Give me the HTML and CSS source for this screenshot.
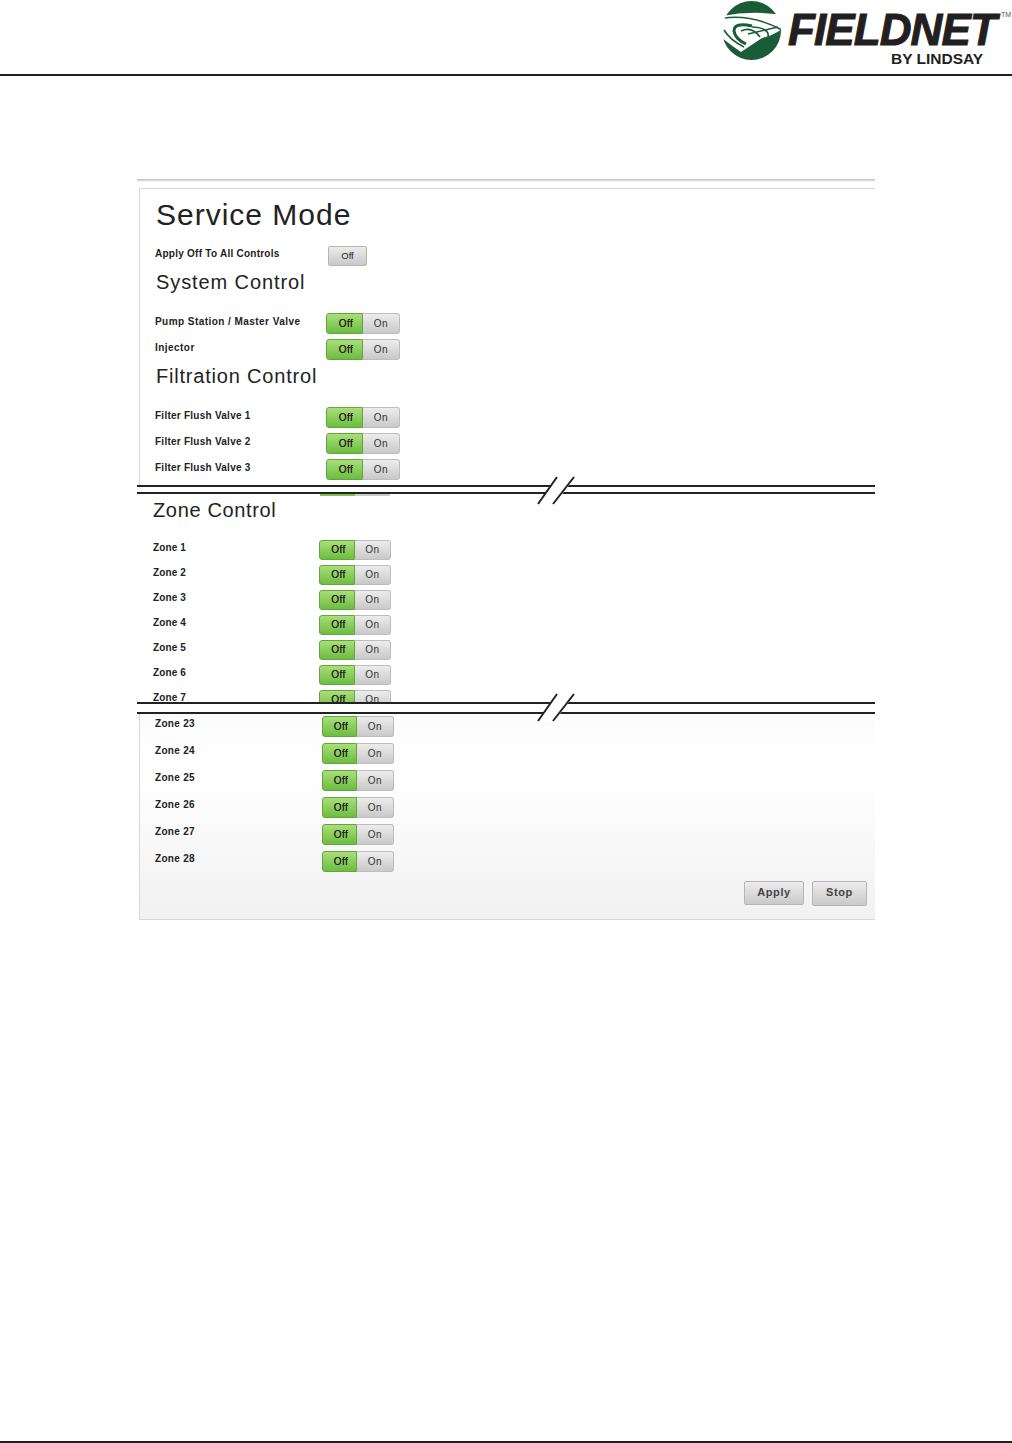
FILE: index.html
```html
<!DOCTYPE html>
<html lang="en">
<head>
    <meta charset="UTF-8">
    <title>FieldNET Service Mode</title>
    <link rel="stylesheet" href="styles.css">
</head>
<body>
    <header class="top">
        <div class="logo">
            <svg class="globe" viewBox="0 0 60 62" width="60" height="62">
                <defs><clipPath id="ball"><circle cx="29.5" cy="30.5" r="29.5"/></clipPath></defs>
                <g clip-path="url(#ball)">
                    <path fill="#1b5c38" d="M0 16 Q30 10 60 15 L60 0 L0 0Z"/>
                    <path fill="#1b5c38" d="M0 38 Q10 46 19 52 L40 38 Q52 35 60 29 L60 62 L0 62Z"/>
                    <path fill="none" stroke="#1b5c38" stroke-width="1.6" d="M2 18 Q30 14 60 30"/>
                    <path fill="none" stroke="#1b5c38" stroke-width="3" d="M30 26 Q12 22 12 31 Q13 39 24 44"/>
                    <path fill="none" stroke="#1b5c38" stroke-width="1.6" d="M38 37 Q30 26 19 31 M26 34 L56 27 M30 27 Q48 28 46 37"/>
                    <path fill="none" stroke="#1b5c38" stroke-width="1.6" d="M2 30 Q8 40 22 47"/>
                </g>
            </svg>
            <div class="wordmark">
                <div class="brand">FIELDNET<span class="tm">TM</span></div>
                <div class="by">BY LINDSAY</div>
            </div>
        </div>
    </header>

    <main class="figure">
        <section class="slice slice-one">
            <div class="panel">
                <h1>Service Mode</h1>
                <div class="row row-all">
                    <span class="label">Apply Off To All Controls</span>
                    <span class="plain">Off</span>
                </div>
                <h2 class="sys">System Control</h2>
                <div class="row"><span class="label">Pump Station / Master Valve</span><span class="toggle"><b>Off</b><i>On</i></span></div>
                <div class="row"><span class="label">Injector</span><span class="toggle"><b>Off</b><i>On</i></span></div>
                <h2 class="filt">Filtration Control</h2>
                <div class="row"><span class="label tight">Filter Flush Valve 1</span><span class="toggle"><b>Off</b><i>On</i></span></div>
                <div class="row"><span class="label tight">Filter Flush Valve 2</span><span class="toggle"><b>Off</b><i>On</i></span></div>
                <div class="row"><span class="label tight">Filter Flush Valve 3</span><span class="toggle"><b>Off</b><i>On</i></span></div>
            </div>
        </section>

        <div class="cut">
            <svg class="slashes" viewBox="0 0 40 30" width="40" height="30">
                <path fill="#fff" d="M19 1 L38 1 L17 29 L1 29Z"/>
                <path fill="none" stroke="#222" stroke-width="2" d="M20 1 L1 28 M37 1 L16 28"/>
            </svg>
        </div>

        <section class="slice slice-two">
            <div class="peek"></div>
            <h2 class="zones">Zone Control</h2>
            <div class="row"><span class="label">Zone 1</span><span class="toggle"><b>Off</b><i>On</i></span></div>
            <div class="row"><span class="label">Zone 2</span><span class="toggle"><b>Off</b><i>On</i></span></div>
            <div class="row"><span class="label">Zone 3</span><span class="toggle"><b>Off</b><i>On</i></span></div>
            <div class="row"><span class="label">Zone 4</span><span class="toggle"><b>Off</b><i>On</i></span></div>
            <div class="row"><span class="label">Zone 5</span><span class="toggle"><b>Off</b><i>On</i></span></div>
            <div class="row"><span class="label">Zone 6</span><span class="toggle"><b>Off</b><i>On</i></span></div>
            <div class="row"><span class="label">Zone 7</span><span class="toggle"><b>Off</b><i>On</i></span></div>
        </section>

        <div class="cut cut-wide">
            <svg class="slashes" viewBox="0 0 40 30" width="40" height="30">
                <path fill="#fff" d="M19 1 L38 1 L17 29 L1 29Z"/>
                <path fill="none" stroke="#222" stroke-width="2" d="M20 1 L1 28 M37 1 L16 28"/>
            </svg>
        </div>

        <section class="slice slice-three">
            <div class="row"><span class="label">Zone 23</span><span class="toggle"><b>Off</b><i>On</i></span></div>
            <div class="row"><span class="label">Zone 24</span><span class="toggle"><b>Off</b><i>On</i></span></div>
            <div class="row"><span class="label">Zone 25</span><span class="toggle"><b>Off</b><i>On</i></span></div>
            <div class="row"><span class="label">Zone 26</span><span class="toggle"><b>Off</b><i>On</i></span></div>
            <div class="row"><span class="label">Zone 27</span><span class="toggle"><b>Off</b><i>On</i></span></div>
            <div class="row"><span class="label">Zone 28</span><span class="toggle"><b>Off</b><i>On</i></span></div>
            <div class="actions">
                <span class="plain big apply">Apply</span>
                <span class="plain big stop">Stop</span>
            </div>
        </section>
    </main>

    <footer class="bottom"></footer>
</body>
</html>
```

FILE: styles.css
```css
* {
    box-sizing: border-box;
}

body {
    margin: 0;
    height: 1443px;
    display: flex;
    flex-direction: column;
    background-color: #fff;
    color: #222;
    font-family: "Liberation Sans", Arial, sans-serif;
}

/* header with logo */
.top {
    height: 76px;
    flex: none;
    display: flex;
    justify-content: flex-end;
    border-bottom: 2px solid #231f20;
}

.logo {
    display: flex;
    gap: 6px;
    height: 74px;
}

.globe {
    display: block;
    flex: none;
}

.wordmark {
    width: 224px;
}

.brand {
    height: 52px;
    padding-top: 8px;
    font-size: 44px;
    line-height: 44px;
    font-weight: bold;
    font-style: italic;
    letter-spacing: -.9px;
    color: #231f20;
    -webkit-text-stroke: 1px #231f20;
    white-space: nowrap;
}

.tm {
    display: inline-block;
    vertical-align: top;
    margin-left: 5px;
    font-size: 7px;
    line-height: 14px;
    font-style: normal;
    font-weight: normal;
    letter-spacing: 0;
    color: #555;
    -webkit-text-stroke: 0;
}

.by {
    padding-left: 103px;
    font-size: 15.5px;
    line-height: 14px;
    font-weight: bold;
    color: #231f20;
}

/* the three cut pieces of the screen */
.figure {
    margin: 103px 0 0 137px;
    width: 738px;
}

.slice {
    overflow: hidden;
}

.slice-one {
    height: 306px;
    padding: 9px 0 0 2px;
    background: linear-gradient(#bbb, #e8e8e8 2px, #fff 3px) no-repeat top / 100% 3px;
}

.panel {
    height: 310px;
    padding: 0 0 0 15px;
    border-top: 1px solid #d8d8d8;
    border-left: 1px solid #d8d8d8;
}

h1 {
    margin: 8px 0 0 1px;
    font-size: 30px;
    line-height: 36px;
    font-weight: normal;
    letter-spacing: 1px;
}

h2 {
    margin: 0;
    font-size: 20px;
    line-height: 24px;
    font-weight: normal;
    letter-spacing: .9px;
}

.sys {
    margin: -1px 0 19px 1px;
}

.filt {
    margin: -1px 0 19px 1px;
    letter-spacing: .8px;
}

.row {
    display: flex;
    align-items: flex-start;
    height: 26px;
}

.label {
    width: 171px;
    flex: none;
    padding-top: 3px;
    font-size: 10px;
    line-height: 12px;
    font-weight: bold;
    letter-spacing: .45px;
}

.label.tight {
    letter-spacing: .25px;
}

.row-all {
    height: 25px;
    margin-top: 13px;
}

.row-all .label {
    width: 173px;
    letter-spacing: .25px;
    padding-top: 2px;
}

.toggle {
    display: flex;
    width: 74px;
    height: 21px;
    flex: none;
    font-size: 10px;
    text-align: center;
    letter-spacing: .5px;
}

.toggle b {
    width: 37px;
    padding-left: 3px;
    font-weight: normal;
    border: 1px solid #63a63c;
    border-radius: 3px 0 0 3px;
    background: linear-gradient(#aade7a, #6cbd40);
    line-height: 19px;
    text-shadow: 0 0 .6px #333;
}

.toggle i {
    flex: 1;
    font-style: normal;
    border: 1px solid #bdbdbd;
    border-left: 0;
    border-radius: 0 3px 3px 0;
    background: linear-gradient(#ececec, #c9c9c9);
    line-height: 19px;
    color: #333;
}

.plain {
    display: block;
    width: 39px;
    height: 20px;
    border: 1px solid #b5b5b5;
    border-radius: 2px;
    background: linear-gradient(#ececec, #c9c9c9);
    font-size: 9.5px;
    line-height: 18px;
    text-align: center;
}

/* break marks */
.cut {
    position: relative;
    height: 9px;
    background-color: #fff;
    border-top: 2px solid #222;
    border-bottom: 2px solid #222;
}

.cut-wide {
    height: 12px;
}

.slashes {
    position: absolute;
    left: 400px;
    top: -11px;
}

.slice-two {
    height: 208px;
    padding-left: 16px;
}

.peek {
    width: 70px;
    height: 2px;
    margin-left: 167px;
    background: linear-gradient(to right, #7cc44e 50%, #ccc 50%);
}

.zones {
    margin: 2px 0 18px;
    letter-spacing: .65px;
}

.slice-two .row {
    height: 25px;
}

.slice-two .label {
    width: 166px;
    padding-top: 2px;
    letter-spacing: .1px;
}

.slice-two .toggle {
    width: 72px;
    height: 20px;
}

.slice-two .toggle b {
    width: 36px;
    line-height: 18px;
}

.slice-two .toggle i {
    line-height: 18px;
}

.slice-three {
    height: 206px;
    padding: 2px 0 0 15px;
    margin-left: 2px;
    border-left: 1px solid #d8d8d8;
    border-bottom: 1px solid #d8d8d8;
    background: linear-gradient(#fbfcfb, #fff 30%, #f1f1f1);
}

.slice-three .row {
    height: 27px;
}

.slice-three .label {
    width: 167px;
    padding-top: 2px;
    letter-spacing: .3px;
}

.slice-three .toggle {
    width: 72px;
}

.slice-three .toggle b {
    width: 35px;
}

.actions {
    display: flex;
    align-items: flex-start;
    justify-content: flex-end;
    gap: 8px;
    margin-top: 3px;
    padding-right: 8px;
}

.plain.big {
    height: 24px;
    font-size: 11px;
    line-height: 21px;
    font-weight: bold;
    letter-spacing: .6px;
    color: #444;
}

.apply {
    width: 60px;
}

.plain.stop {
    width: 55px;
    height: 25px;
}

.bottom {
    flex: none;
    margin-top: auto;
    margin-bottom: 0;
    height: 2px;
    background-color: #231f20;
}
```
